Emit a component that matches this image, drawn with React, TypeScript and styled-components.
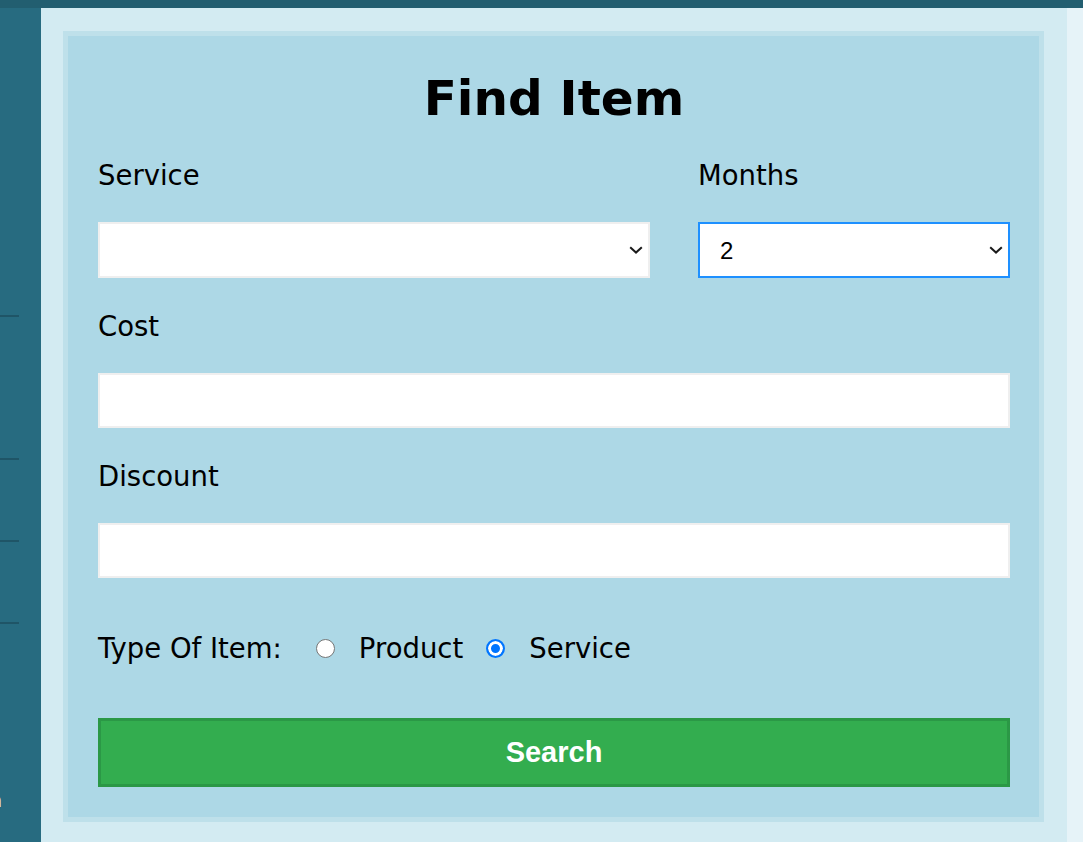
import React from "react";
import styled, { createGlobalStyle } from "styled-components";

const GlobalStyle = createGlobalStyle`
  html, body {
    margin: 0;
    padding: 0;
    background: #d3ebf2;
  }
  * { box-sizing: border-box; }
`;

const Page = styled.div`
  display: grid;
  grid-template-rows: 8px 1fr;
  width: 1083px;
  height: 842px;
  overflow: hidden;
  font-family: "DejaVu Sans", Verdana, sans-serif;
`;

const TopBar = styled.header`
  background: #225e70;
`;

const Body = styled.div`
  display: flex;
  min-height: 0;
`;

const Sidebar = styled.nav`
  width: 41px;
  flex: 0 0 41px;
  background: #276b80;
  display: flex;
  flex-direction: column;
  overflow: hidden;
`;

const NavItem = styled.div<{ $h: number }>`
  width: 19px;
  height: ${(p) => p.$h}px;
  flex: 0 0 auto;
  border-bottom: 2px solid #1f5567;
`;

const NavLabel = styled.span`
  display: block;
  margin-top: 164px;
  margin-left: -10.5px;
  font-size: 20px;
  color: #ececec;
  white-space: nowrap;
`;

const Main = styled.main`
  flex: 1;
  background: #d3ebf2;
  padding: 23px 23px 20px 22px;
`;

const RightStrip = styled.aside`
  width: 16px;
  flex: 0 0 16px;
  background: #e6f3f8;
`;

const Card = styled.form`
  background: #add8e6;
  border: 5px solid #bee0ea;
  padding: 34px 29px 30px 30px;
`;

const Title = styled.h1`
  margin: 0 0 33px 0;
  font-size: 48.5px;
  line-height: 56px;
  font-weight: bold;
  text-align: center;
  color: #000;
`;

const Row = styled.div`
  display: grid;
  grid-template-columns: 552px 1fr;
  column-gap: 48px;
`;

const Field = styled.div`
  margin-bottom: 32px;
`;

const Label = styled.label`
  display: block;
  font-size: 27.5px;
  line-height: 32px;
  margin-bottom: 31px;
  color: #000;
`;

const SelectWrap = styled.div`
  position: relative;
`;

const Select = styled.select<{ $focused?: boolean }>`
  appearance: none;
  -webkit-appearance: none;
  display: block;
  width: 100%;
  height: 56px;
  margin: 0;
  padding: 0 30px 0 20px;
  border: 2px solid ${(p) => (p.$focused ? "#1e90ff" : "#efefef")};
  border-radius: 0;
  background: #fff;
  font-family: "Liberation Sans", Arial, sans-serif;
  font-size: 24px;
  color: #000;
  outline: none;
`;

const Chevron = styled.svg`
  position: absolute;
  right: 7px;
  top: 50%;
  transform: translateY(-50%);
  pointer-events: none;
`;

const TextInput = styled.input`
  display: block;
  width: 100%;
  height: 55px;
  margin: 0;
  padding: 0 20px;
  border: 2px solid #efefef;
  border-radius: 0;
  background: #fff;
  font-family: "Liberation Sans", Arial, sans-serif;
  font-size: 24px;
  outline: none;
`;

const RadioRow = styled.div`
  display: flex;
  align-items: center;
  height: 32px;
  margin-top: 54px;
  font-size: 27.5px;
  line-height: 32px;
  color: #000;
`;

const TypeLabel = styled.span`
  margin-right: 34px;
`;

const Radio = styled.input`
  appearance: none;
  -webkit-appearance: none;
  width: 19px;
  height: 19px;
  min-width: 19px;
  margin: 0 24px 0 0;
  border-radius: 50%;
  border: 1px solid #767676;
  background: #fff;
  flex: 0 0 19px;

  &:checked {
    border: 2px solid #0075ff;
    background: #0075ff;
    box-shadow: inset 0 0 0 3px #fff;
  }
`;

const OptionLabel = styled.label`
  margin-right: 23px;
`;

const SearchButton = styled.button`
  display: block;
  width: 100%;
  height: 69px;
  margin-top: 54px;
  padding: 0;
  background: #33ad4f;
  border: 3px solid #2b9846;
  border-radius: 0;
  color: #fff;
  font-family: "Liberation Sans", Arial, sans-serif;
  font-weight: bold;
  font-size: 29px;
  cursor: pointer;
`;

const ChevronIcon = () => (
  <Chevron width="14" height="8" viewBox="0 0 14 8" aria-hidden="true">
    <path d="M1.2 1.2 L7 6.6 L12.8 1.2" fill="none" stroke="#1a1a1a" strokeWidth="2" />
  </Chevron>
);

export default function App() {
  return (
    <>
      <GlobalStyle />
      <Page>
        <TopBar />
        <Body>
          <Sidebar>
            <NavItem $h={309} />
            <NavItem $h={143} />
            <NavItem $h={82} />
            <NavItem $h={82} />
            <NavLabel>n</NavLabel>
          </Sidebar>
          <Main>
            <Card onSubmit={(e) => e.preventDefault()}>
              <Title>Find Item</Title>
              <Row>
                <Field>
                  <Label htmlFor="service">Service</Label>
                  <SelectWrap>
                    <Select id="service" defaultValue="">
                      <option value=""></option>
                      <option value="a">Service A</option>
                    </Select>
                    <ChevronIcon />
                  </SelectWrap>
                </Field>
                <Field>
                  <Label htmlFor="months">Months</Label>
                  <SelectWrap>
                    <Select id="months" defaultValue="2" $focused>
                      <option value="1">1</option>
                      <option value="2">2</option>
                      <option value="3">3</option>
                    </Select>
                    <ChevronIcon />
                  </SelectWrap>
                </Field>
              </Row>
              <Field>
                <Label htmlFor="cost">Cost</Label>
                <TextInput id="cost" type="text" />
              </Field>
              <Field>
                <Label htmlFor="discount">Discount</Label>
                <TextInput id="discount" type="text" />
              </Field>
              <RadioRow>
                <TypeLabel>Type Of Item:</TypeLabel>
                <Radio type="radio" name="type" id="product" />
                <OptionLabel htmlFor="product">Product</OptionLabel>
                <Radio type="radio" name="type" id="svc" defaultChecked />
                <OptionLabel htmlFor="svc">Service</OptionLabel>
              </RadioRow>
              <SearchButton type="submit">Search</SearchButton>
            </Card>
          </Main>
          <RightStrip />
        </Body>
      </Page>
    </>
  );
}
